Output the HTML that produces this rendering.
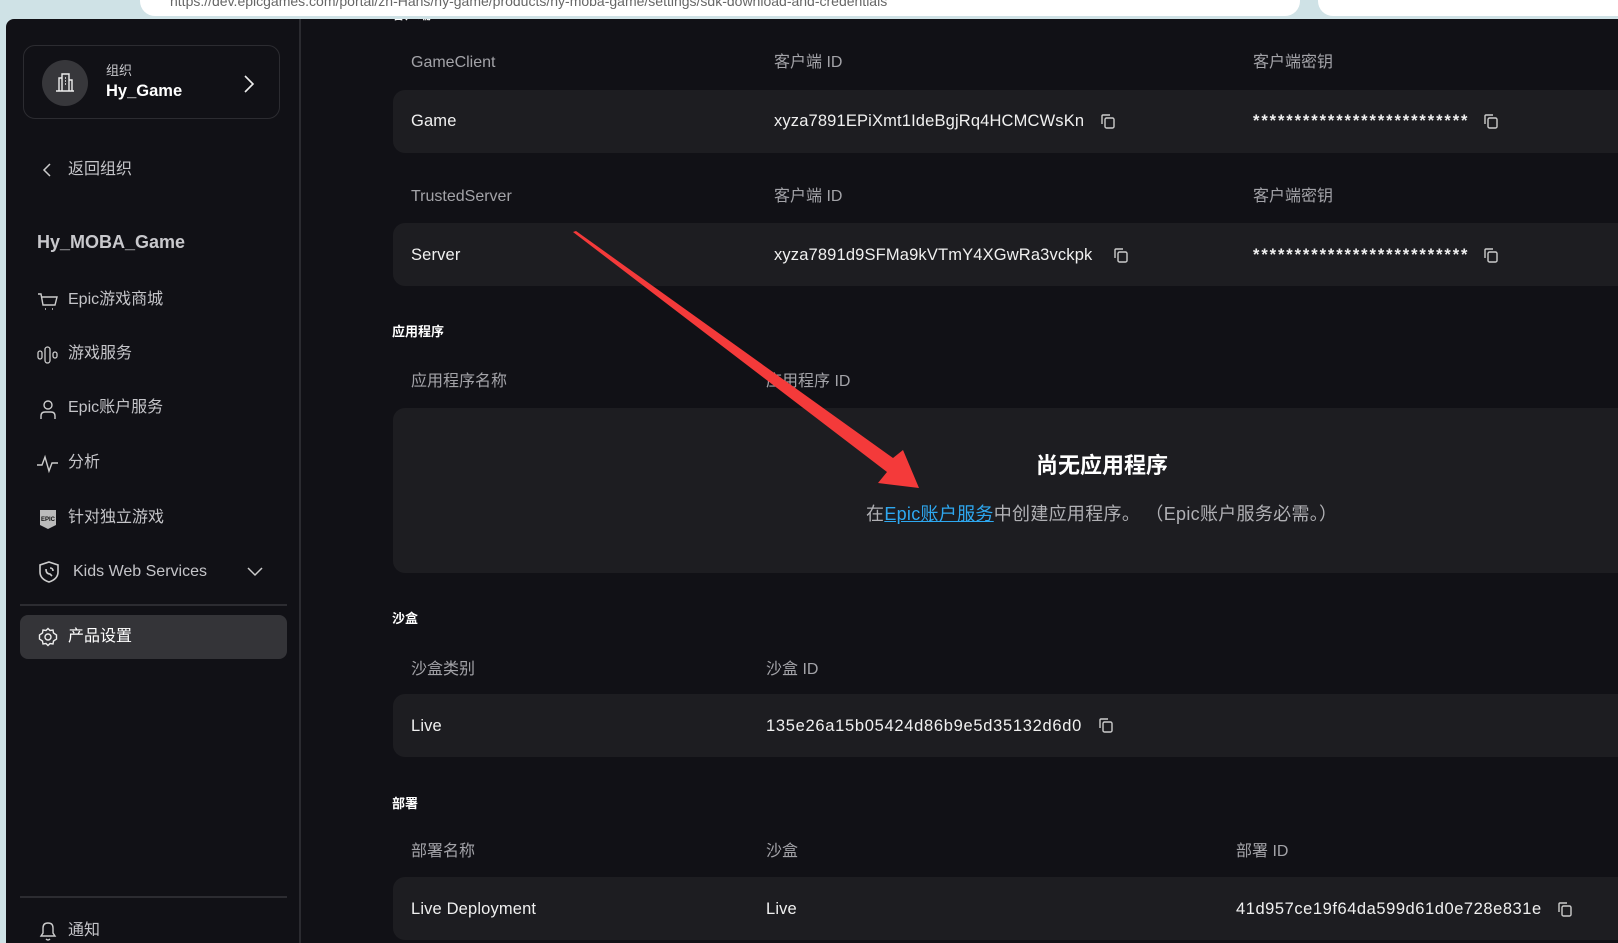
<!DOCTYPE html>
<html><head><meta charset="utf-8"><style>
*{margin:0;padding:0;box-sizing:border-box}
body{width:1618px;height:943px;overflow:hidden;background:#cfe2e6;font-family:"Liberation Sans","Noto Sans CJK SC",sans-serif;position:relative}
.a{position:absolute;white-space:nowrap;line-height:20px}
#app{position:absolute;left:6px;top:19px;width:1612px;height:924px;background:#111116;border-top-left-radius:8px;overflow:hidden}
.lbl{color:#a3a3a8;font-size:16px}
.val{color:#f0f0f0;font-size:16.5px;letter-spacing:0.15px}
.hex{letter-spacing:0.7px}
.row{position:absolute;left:387px;right:0;background:#1d1d21;border-radius:12px 0 0 12px}
.hd{color:#fff;font-size:13px;font-weight:bold}
.nav{color:#c4c4c8;font-size:16px}
svg.i{position:absolute}
</style></head><body>
<div class="a" style="left:140px;top:-14px;width:1160px;height:30px;background:#fff;border-radius:15px;color:#666;font-size:14px;padding:5px 30px;overflow:hidden">https://dev.epicgames.com/portal/zh-Hans/hy-game/products/hy-moba-game/settings/sdk-download-and-credentials</div>
<div class="a" style="left:1318px;top:-14px;width:320px;height:30px;background:#fff;border-radius:15px"></div>
<div id="app">
 <div class="a" style="left:293px;top:0;width:2px;height:924px;background:#2b2b30"></div>
 <div class="a" style="left:17px;top:26px;width:257px;height:74px;border:1px solid #2c2c31;border-radius:12px"></div>
 <div class="a" style="left:36px;top:41px;width:46px;height:46px;border-radius:50%;background:#37373b"></div>
 <svg class="i" style="left:48px;top:52px" width="22" height="22" viewBox="0 0 22 22" fill="none" stroke="#eee" stroke-width="1.4"><path d="M2 20H20M5 20V7H8M8 20V3H15V20M15 9H18V20M11 7H12M11 10H12M11 13H12"/></svg>
 <div class="a" style="left:100px;top:42px;color:#c8c8cc;font-size:13px">组织</div>
 <div class="a" style="left:100px;top:62px;color:#fff;font-size:16.5px;font-weight:bold">Hy_Game</div>
 <svg class="i" style="left:236px;top:55px" width="14" height="20" viewBox="0 0 14 20" fill="none" stroke="#eee" stroke-width="1.6"><path d="M3 2L11 10L3 18"/></svg>
 <svg class="i" style="left:36px;top:143px" width="10" height="16" viewBox="0 0 10 16" fill="none" stroke="#ccc" stroke-width="1.5"><path d="M8 2L2 8L8 14"/></svg>
 <div class="a nav" style="left:62px;top:141px">返回组织</div>
 <div class="a" style="left:31px;top:213px;color:#c8c8cc;font-size:18px;font-weight:bold">Hy_MOBA_Game</div>
 <svg class="i" style="left:31px;top:273px" width="22" height="20" viewBox="0 0 22 20" fill="none" stroke="#ccc" stroke-width="1.4"><path d="M1 2H4L6 13H18L20 5H5M8 17h1M15 17h1"/></svg>
 <div class="a nav" style="left:62px;top:271px">Epic游戏商城</div>
 <svg class="i" style="left:31px;top:326px" width="22" height="20" viewBox="0 0 22 20" fill="none" stroke="#ccc" stroke-width="1.3"><rect x="1" y="6" width="4" height="8" rx="2"/><rect x="8" y="2" width="5" height="16" rx="2.5"/><rect x="16" y="7" width="4" height="6" rx="2"/></svg>
 <div class="a nav" style="left:62px;top:325px">游戏服务</div>
 <svg class="i" style="left:32px;top:380px" width="20" height="22" viewBox="0 0 20 22" fill="none" stroke="#ccc" stroke-width="1.4"><circle cx="10" cy="6" r="4"/><path d="M3 20V17Q3 13 7 13H13Q17 13 17 17V20"/></svg>
 <div class="a nav" style="left:62px;top:379px">Epic账户服务</div>
 <svg class="i" style="left:30px;top:434px" width="24" height="22" viewBox="0 0 24 22" fill="none" stroke="#ccc" stroke-width="1.4"><path d="M1 12H6L9 4L13 18L16 10H22"/></svg>
 <div class="a nav" style="left:62px;top:434px">分析</div>
 <svg class="i" style="left:33px;top:489px" width="18" height="22" viewBox="0 0 18 22"><path d="M1 2H17V17L9 21L1 17Z" fill="#bbb"/><text x="9" y="13" font-size="6" font-family="Liberation Sans" fill="#111" text-anchor="middle" font-weight="bold">EPIC</text></svg>
 <div class="a nav" style="left:62px;top:489px">针对独立游戏</div>
 <svg class="i" style="left:32px;top:541px" width="22" height="24" viewBox="0 0 22 24" fill="none" stroke="#ccc" stroke-width="1.6"><path d="M11 2L20 5V12Q20 19 11 22Q2 19 2 12V5Z"/><path d="M8 9Q8 14 12 14L14 16M12 8Q15 8 15 11"/></svg>
 <div class="a nav" style="left:67px;top:543px">Kids Web Services</div>
 <svg class="i" style="left:240px;top:547px" width="18" height="12" viewBox="0 0 18 12" fill="none" stroke="#ccc" stroke-width="1.5"><path d="M2 2L9 9L16 2"/></svg>
 <div class="a" style="left:14px;top:585px;width:267px;height:2px;background:#2c2c31"></div>
 <div class="a" style="left:14px;top:596px;width:267px;height:44px;background:#343438;border-radius:8px"></div>
 <svg class="i" style="left:32px;top:608px" width="20" height="20" viewBox="0 0 20 20" fill="none" stroke="#eee" stroke-width="1.4"><circle cx="10" cy="10" r="3"/><path d="M10 1.5L12 3.5L15 3L15.5 6L18.5 8V12L15.5 14L15 17L12 16.5L10 18.5L8 16.5L5 17L4.5 14L1.5 12V8L4.5 6L5 3L8 3.5Z"/></svg>
 <div class="a" style="left:62px;top:608px;color:#fff;font-size:16px">产品设置</div>
 <div class="a" style="left:14px;top:877px;width:267px;height:2px;background:#2c2c31"></div>
 <svg class="i" style="left:32px;top:901px" width="20" height="22" viewBox="0 0 20 22" fill="none" stroke="#ccc" stroke-width="1.4"><path d="M3 16H17L15 13V8Q15 3 10 3Q5 3 5 8V13ZM8 19Q10 21 12 19"/></svg>
 <div class="a nav" style="left:62px;top:902px">通知</div>

 <div class="a hd" style="left:386px;top:-14px">客户端</div>
 <div class="a lbl" style="left:405px;top:34px">GameClient</div>
 <div class="a lbl" style="left:768px;top:34px">客户端 ID</div>
 <div class="a lbl" style="left:1247px;top:34px">客户端密钥</div>
 <div class="row" style="top:71px;height:63px"></div>
 <div class="a val" style="left:405px;top:92px">Game</div>
 <div class="a val" style="left:768px;top:92px">xyza7891EPiXmt1IdeBgjRq4HCMCWsKn</div>
 <div class="a val" style="left:1247px;top:92px;letter-spacing:1.9px;font-weight:bold">**************************</div>
 <div class="a lbl" style="left:405px;top:168px">TrustedServer</div>
 <div class="a lbl" style="left:768px;top:168px">客户端 ID</div>
 <div class="a lbl" style="left:1247px;top:168px">客户端密钥</div>
 <div class="row" style="top:204px;height:63px"></div>
 <div class="a val" style="left:405px;top:226px">Server</div>
 <div class="a val" style="left:768px;top:226px">xyza7891d9SFMa9kVTmY4XGwRa3vckpk</div>
 <div class="a val" style="left:1247px;top:226px;letter-spacing:1.9px;font-weight:bold">**************************</div>

 <div class="a hd" style="left:386px;top:303px">应用程序</div>
 <div class="a lbl" style="left:405px;top:353px">应用程序名称</div>
 <div class="a lbl" style="left:760px;top:353px">应用程序 ID</div>
 <div class="row" style="top:389px;height:165px"></div>
 <div class="a" style="left:1030px;top:434px;color:#fff;font-size:22px;font-weight:bold;line-height:26px">尚无应用程序</div>
 <div class="a" style="left:860px;top:484px;color:#b0b0b4;font-size:18px;line-height:22px;letter-spacing:0.3px">在<span style="color:#2ea8f0;text-decoration:underline">Epic账户服务</span>中创建应用程序。 （Epic账户服务必需。）</div>

 <div class="a hd" style="left:386px;top:590px">沙盒</div>
 <div class="a lbl" style="left:405px;top:641px">沙盒类别</div>
 <div class="a lbl" style="left:760px;top:641px">沙盒 ID</div>
 <div class="row" style="top:675px;height:63px"></div>
 <div class="a val" style="left:405px;top:697px">Live</div>
 <div class="a val hex" style="left:760px;top:697px">135e26a15b05424d86b9e5d35132d6d0</div>

 <div class="a hd" style="left:386px;top:775px">部署</div>
 <div class="a lbl" style="left:405px;top:823px">部署名称</div>
 <div class="a lbl" style="left:760px;top:823px">沙盒</div>
 <div class="a lbl" style="left:1230px;top:823px">部署 ID</div>
 <div class="row" style="top:858px;height:63px"></div>
 <div class="a val" style="left:405px;top:880px">Live Deployment</div>
 <div class="a val" style="left:760px;top:880px">Live</div>
 <div class="a val hex" style="left:1230px;top:880px;letter-spacing:0.55px">41d957ce19f64da599d61d0e728e831e</div>
</div>
<svg class="i" style="left:0;top:0" width="1618" height="943">
 <defs><g id="cp" fill="none" stroke="#ccc" stroke-width="1.4"><path d="M1 10V2Q1 1 2 1H9"/><rect x="4" y="4" width="9" height="10" rx="1.5"/></g></defs>
 <use href="#cp" x="1101" y="114"/>
 <use href="#cp" x="1114" y="248"/>
 <use href="#cp" x="1484" y="114"/>
 <use href="#cp" x="1484" y="248"/>
 <use href="#cp" x="1099" y="718"/>
 <use href="#cp" x="1558" y="902"/>
 <polygon points="573,232 576,231 893,458 903,450 919,488 878,483 887,472" fill="#f43a3a"/>
</svg>
</body></html>
